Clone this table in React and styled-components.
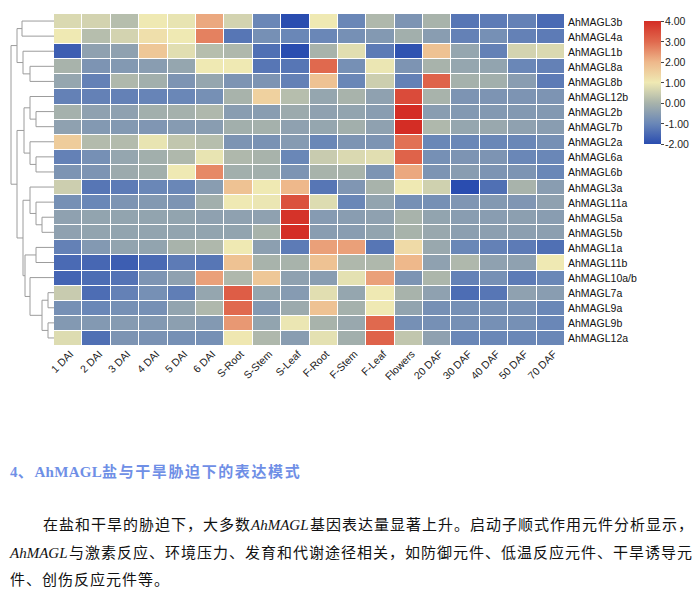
import React from 'react';
import styled, { createGlobalStyle } from 'styled-components';

const GENES = [
  'AhMAGL3b', 'AhMAGL4a', 'AhMAGL1b', 'AhMAGL8a', 'AhMAGL8b', 'AhMAGL12b',
  'AhMAGL2b', 'AhMAGL7b', 'AhMAGL2a', 'AhMAGL6a', 'AhMAGL6b', 'AhMAGL3a',
  'AhMAGL11a', 'AhMAGL5a', 'AhMAGL5b', 'AhMAGL1a', 'AhMAGL11b', 'AhMAGL10a/b',
  'AhMAGL7a', 'AhMAGL9a', 'AhMAGL9b', 'AhMAGL12a'
];

const SAMPLES = [
  '1 DAI', '2 DAI', '3 DAI', '4 DAI', '5 DAI', '6 DAI', 'S-Root', 'S-Stem', 'S-Leaf',
  'F-Root', 'F-Stem', 'F-Leaf', 'Flowers', '20 DAF', '30 DAF', '40 DAF', '50 DAF', '70 DAF'
];

// log2 expression, one row per gene, one value per sample
const VALUES = [
  [0.7, 0.6, 0.2, 1.0, 0.9, 2.2, 0.6, -1, -2, 1.0, -1, 0.1, -0.7, 0, -1.3, -1.2, -1.1, -1.5],
  [1.0, 0.2, 0.6, 1.2, 1.0, 2.7, -1.3, -0.8, -1, -1, -0.8, -0.6, -0.1, -0.5, -1.1, -0.8, -1.1, -1.2],
  [-1.7, -0.4, -0.4, 1.7, 0.8, 0.2, 0.1, -1.4, -2, 0, 0.8, -1.2, -1.9, 1.8, -0.3, -1.1, 0.6, 0.7],
  [0, -0.7, -0.6, -0.5, -0.3, 1.0, 1.0, -1.3, -1.3, 3.0, -0.8, 0.95, -0.7, 0, -0.3, -0.35, -1, -1.1],
  [-0.3, -1.1, 0.1, -0.1, -0.7, -0.3, -0.7, -0.7, -1.1, 1.8, -1, 0.5, -1.1, 3.1, -0.05, -0.1, -0.5, -1.2],
  [-1.1, -1.1, -1.1, -1.05, -1.0, -0.8, 0, 1.5, 0.2, -0.3, 0, -0.4, 3.5, 0, -0.7, -0.7, -0.7, -0.7],
  [-0.05, -0.4, -0.4, -0.1, -0.05, 0.1, -0.5, -0.5, -0.2, -0.4, -0.35, -0.5, 4, -0.5, -0.6, -0.6, -0.6, -0.6],
  [-0.4, -0.6, -0.6, -0.65, -0.55, -0.5, -0.1, -0.05, -0.4, -0.3, -0.1, -0.4, 4, 0.1, -0.3, -0.25, -0.4, -0.5],
  [1.6, 0.15, 0.15, 0.9, 0.35, 0.2, -0.7, -0.75, -0.55, -1, -0.7, -0.7, 2.9, -1, -1, -1, -1, -0.8],
  [-1.1, -0.8, -0.3, -0.1, 0.1, 0.9, 0.1, 0, -1, 0.45, 0.7, 0.8, 3.1, -0.8, -0.7, -0.7, -1, -1],
  [-0.7, -0.7, -0.2, -0.1, 1.0, 2.6, -0.1, -0.1, -0.7, 0, 0, -0.7, 2.2, -0.7, -0.5, -0.7, -0.7, -1],
  [0.5, -1.3, -1.2, -1, -1, -0.5, 1.8, 1.0, 2.0, -1.3, -0.65, 0, 1.0, 0.55, -2, -1.4, 0, -0.5],
  [-0.8, -1, -0.7, -0.6, -0.7, -0.1, 1.0, 0.95, 3.4, 0.75, -1, -0.35, -0.8, -0.8, -0.65, -0.6, -0.65, -0.4],
  [-0.4, -0.35, -0.35, -0.35, -0.35, -0.4, -0.4, -0.4, 3.9, -0.55, -0.5, -0.4, 0, -0.35, -0.5, -0.5, -0.45, -0.5],
  [-0.4, -0.35, -0.35, -0.35, -0.35, -0.35, -0.35, 0, 4, -0.5, -0.5, -0.35, 0, -0.25, -0.45, -0.45, -0.45, -0.45],
  [-1.1, -0.6, -0.35, -0.35, 0, 0.1, 1.0, -0.45, -1.2, 2.3, 2.3, -1.3, 1.3, -0.25, -1, -1.1, -1.2, -1.4],
  [-1.5, -1.55, -1.7, -1.5, -1.2, -1.3, 1.8, 0, 0, 1.8, 0.1, 0.1, 2.0, -0.4, 0.1, -0.4, -0.4, 1.0],
  [-1.6, -1.45, -1.35, -0.7, -0.4, 2.3, 0.1, 1.7, -0.4, -0.5, 0.85, 2.3, -0.7, 0.05, -1.1, -0.8, -1.2, -1],
  [0.45, -1.45, -1.1, -0.8, -1.15, -0.3, 3.2, -0.3, -0.55, 0.8, -0.3, 1.0, 0, -0.4, -1.45, -1.3, -0.4, -0.5],
  [-0.8, -1, -0.8, -0.8, -0.35, 0.1, 3.0, -0.6, -0.2, 1.8, -0.05, 1.0, -0.35, -0.8, -0.8, -0.8, -0.8, -1],
  [-0.6, -0.6, -0.55, -0.6, -0.45, -0.6, 2.4, -0.35, 0.95, 0, -0.25, 3.0, -0.8, -0.8, -0.8, -0.8, -0.8, -1],
  [0.75, -1.4, -0.7, -0.75, -0.8, -0.8, 1.05, 0.1, -0.5, 0.85, -0.1, 3.1, 0.35, -0.4, -1, -1, -1, -1]
];

const STOPS = [
  [-2, [42, 77, 176]],
  [-1, [106, 135, 183]],
  [0, [168, 179, 171]],
  [1, [239, 233, 179]],
  [2, [238, 184, 139]],
  [3, [224, 105, 78]],
  [4, [212, 45, 37]]
];

const heat = v => {
  const x = Math.max(-2, Math.min(4, v));
  let i = 0;
  while (i < STOPS.length - 2 && x > STOPS[i + 1][0]) i++;
  const [a, ca] = STOPS[i];
  const [b, cb] = STOPS[i + 1];
  const t = (x - a) / (b - a);
  const c = ca.map((n, k) => Math.round(n + (cb[k] - n) * t));
  return `rgb(${c.join(',')})`;
};

// hierarchical clustering of the rows: x = height of the join
const N = (x, a, b) => ({ x, c: [a, b] });
const TREE = N(11,
  N(17, N(22, 0, 1), N(23, 2, N(30, 3, 4))),
  N(17,
    N(24, N(30, 5, N(36, 6, 7)), N(30, 8, N(36, 9, 10))),
    N(23,
      N(30, 11, N(36, 12, N(42, 13, 14))),
      N(25, N(36, 15, 16), N(30, 17, N(42, N(48, 18, 19), N(48, 20, 21)))))));

const PITCH = 332 / 22;

const layout = (node, segs) => {
  if (typeof node === 'number') return { x: 54, y: PITCH * node + (PITCH - 1) / 2 };
  const a = layout(node.c[0], segs);
  const b = layout(node.c[1], segs);
  segs.push(`M${a.x} ${a.y}H${node.x}V${b.y}H${b.x}`);
  return { x: node.x, y: (a.y + b.y) / 2 };
};

const TREE_SEGS = [];
layout(TREE, TREE_SEGS);

const TICKS = ['4.00', '3.00', '2.00', '1.00', '0.00', '-1.00', '-2.00'];

const GlobalStyle = createGlobalStyle`
  body {
    margin: 0;
    background: #fff;
    font-family: "Liberation Sans", Arial, sans-serif;
  }
`;

const Page = styled.div`
  width: 697px;
`;

const Figure = styled.div`
  display: flex;
  align-items: flex-start;
  padding-top: 14px;
`;

const Tree = styled.svg`
  display: block;
  flex: none;
`;

const Heatmap = styled.div`
  display: grid;
  grid-template-columns: repeat(18, 1fr);
  grid-template-rows: repeat(22, 1fr);
  gap: 1px;
  width: 510px;
  height: 331px;
  flex: none;
  background: #fff;
`;

const Cell = styled.div`
  background: ${p => heat(p.$v)};
`;

const RowLabels = styled.div`
  display: grid;
  grid-template-rows: repeat(22, 1fr);
  width: 80px;
  height: 332px;
  padding-left: 4px;
  box-sizing: border-box;
  flex: none;
`;

const RowLabel = styled.div`
  display: flex;
  align-items: center;
  font-size: 10.5px;
  color: #111;
  white-space: nowrap;
`;

const Legend = styled.div`
  display: flex;
  margin-top: 7px;
`;

const Bar = styled.div`
  width: 17px;
  height: 123px;
  background: linear-gradient(
    to bottom,
    #d42d25 0%,
    #e0694e 16.67%,
    #eeb88b 33.33%,
    #efe9b3 50%,
    #a8b3ab 66.67%,
    #6a87b7 83.33%,
    #2a4db0 100%
  );
`;

const Ticks = styled.div`
  display: flex;
  flex-direction: column;
  justify-content: space-between;
  height: 123px;
`;

const Tick = styled.div`
  height: 0;
  display: flex;
  align-items: center;
  font-size: 10.5px;
  color: #222;
  white-space: nowrap;
  &::before {
    content: '';
    width: 3px;
    height: 1px;
    margin-right: 1px;
    background: #444;
  }
`;

const ColAxis = styled.div`
  display: grid;
  grid-template-columns: repeat(18, 1fr);
  gap: 1px;
  width: 510px;
  height: 42px;
  margin-left: 54px;
`;

const ColTick = styled.div`
  position: relative;
`;

const ColText = styled.span`
  position: absolute;
  right: calc(50% - 4px);
  top: 0;
  line-height: 12px;
  font-size: 10.5px;
  color: #222;
  white-space: nowrap;
  transform: rotate(-45deg);
  transform-origin: 100% 50%;
`;

const Article = styled.div`
  padding-left: 10px;
  margin-top: 74px;
`;

const Heading = styled.h3`
  margin: 0;
  font: bold 15px/20px "Liberation Serif", "Noto Sans CJK SC", serif;
  color: #6f8fe6;
  letter-spacing: 1.6px;
`;

const Latin = styled.span`
  letter-spacing: 0.3px;
`;

const Para = styled.p`
  width: 686px;
  margin: 29px 0 0;
  font-family: "Noto Sans CJK SC", sans-serif;
  font-size: 15px;
  line-height: 26.5px;
  letter-spacing: 1px;
  text-indent: 33px;
  color: #111;
`;

const Gene = styled.i`
  font-family: "Liberation Serif", serif;
  letter-spacing: 0;
  padding-right: 1.5px;
`;

export default function App() {
  return (
    <Page>
      <GlobalStyle />
      <Figure>
        <Tree width="54" height="332" viewBox="0 0 54 332">
          <path d={TREE_SEGS.join('')} fill="none" stroke="#9c9c9c" strokeWidth="1" />
        </Tree>
        <Heatmap>
          {VALUES.map((row, r) =>
            row.map((v, c) => <Cell key={`${r}-${c}`} $v={v} />)
          )}
        </Heatmap>
        <RowLabels>
          {GENES.map(g => <RowLabel key={g}>{g}</RowLabel>)}
        </RowLabels>
        <Legend>
          <Bar />
          <Ticks>
            {TICKS.map(t => <Tick key={t}>{t}</Tick>)}
          </Ticks>
        </Legend>
      </Figure>
      <ColAxis>
        {SAMPLES.map(s => (
          <ColTick key={s}>
            <ColText>{s}</ColText>
          </ColTick>
        ))}
      </ColAxis>
      <Article>
        <Heading>
          <Latin>4</Latin>、<Latin>AhMAGL</Latin>盐与干旱胁迫下的表达模式
        </Heading>
        <Para>
          在盐和干旱的胁迫下，大多数<Gene>AhMAGL</Gene>基因表达量显著上升。启动子顺式作用元件分析显示，
          <Gene>AhMAGL</Gene>与激素反应、环境压力、发育和代谢途径相关，如防御元件、低温反应元件、干旱诱导元件、创伤反应元件等。
        </Para>
      </Article>
    </Page>
  );
}
